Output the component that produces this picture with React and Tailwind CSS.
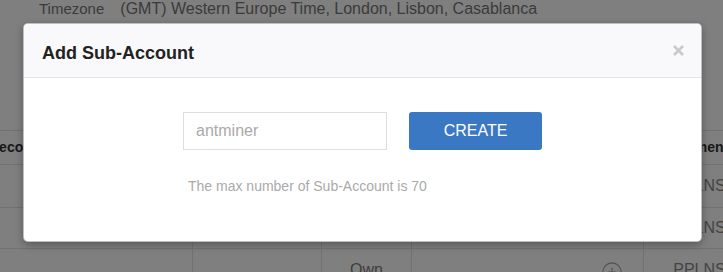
import { CirclePlus } from "lucide-react";

const row = "grid grid-cols-[216px_129px_90px_232px_112px] border-t border-[#e5e5e5]";

const accounts = [
  { name: "antminer01", coin: "BTC", type: "Own", method: "PPLNS", h: "h-[43px]" },
  { name: "antminer02", coin: "BTC", type: "Own", method: "PPLNS", h: "h-[41px]" },
  { name: "antminer03", coin: "BTC", type: "Own", method: "PPLNS", h: "h-[42px]" },
];

function CloseIcon() {
  return (
    <svg width="11" height="11" viewBox="0 0 11 11" stroke="#c9c9cc" strokeWidth="2.6" strokeLinecap="butt">
      <path d="M1 1l9 9M10 1l-9 9" />
    </svg>
  );
}

export default function App() {
  return (
    <div className="relative h-[272px] w-full overflow-hidden bg-white font-['Liberation_Sans',Arial,sans-serif]">
      {/* page behind the dialog */}
      <div className="flex items-baseline pl-[39px] leading-[18px] text-[#777]">
        <span className="text-[15px]">Timezone</span>
        <span className="ml-[16px] text-[16px]">(GMT) Western Europe Time, London, Lisbon, Casablanca</span>
      </div>

      <div className="ml-[-24px] mt-[112px] w-max">
        <div className={`${row} h-[34px] items-center text-[14px] font-bold text-[#333]`}>
          <div className="pl-[13px]">Record</div>
          <div className="text-center">Sub-Account</div>
          <div className="text-center">Type</div>
          <div className="text-center">Remark</div>
          <div className="text-center">Payment</div>
        </div>
        {accounts.map((a) => (
          <div key={a.name} className={`${row} ${a.h} text-[16px] text-[#888]`}>
            <div className="flex items-center pl-[13px]"></div>
            <div className="flex items-center justify-center border-l border-[#e5e5e5]"></div>
            <div className="flex items-center justify-center border-l border-[#e5e5e5] text-[#7c7c7c]">{a.type}</div>
            <div className="flex items-center justify-end border-l border-[#e5e5e5] pr-[20px]">
              <CirclePlus size={22} strokeWidth={1.2} color="#a0a0a0" className="mt-[4px]" />
            </div>
            <div className="flex items-center justify-center border-l border-[#e5e5e5]">{a.method}</div>
          </div>
        ))}
      </div>

      {/* backdrop */}
      <div className="absolute inset-0 bg-black/50" />

      {/* dialog */}
      <div className="absolute left-[23px] top-[23px] w-[679px] overflow-hidden rounded-[5px] border border-black/25 bg-white shadow-[0_3px_9px_rgba(0,0,0,0.3)]">
        <div className="flex items-start justify-between border-b border-[#e5e5e5] bg-[#f9f9fb] pl-[18px] pr-[17px] pt-[18px] pb-[13px]">
          <h4 className="text-[18px] font-bold leading-[22px] text-[#222]">Add Sub-Account</h4>
          <button type="button" className="mt-[3px]">
            <CloseIcon />
          </button>
        </div>
        <div className="flex justify-center pt-[34px] pb-[45px]">
          <div className="w-[359px]">
            <div className="flex gap-[22px]">
              <input
                className="h-[38px] w-[204px] border border-[#dedede] pl-[12px] text-[16px] text-[#555] outline-none placeholder:text-[#aaa]"
                placeholder="antminer"
              />
              <button
                type="button"
                className="h-[38px] w-[133px] rounded-[3px] bg-[#3b78c3] text-[16px] text-white"
              >
                CREATE
              </button>
            </div>
            <p className="mt-[26px] pl-[5px] text-[14px] leading-[20px] text-[#aaa]">
              The max number of Sub-Account is 70
            </p>
          </div>
        </div>
      </div>
    </div>
  );
}
